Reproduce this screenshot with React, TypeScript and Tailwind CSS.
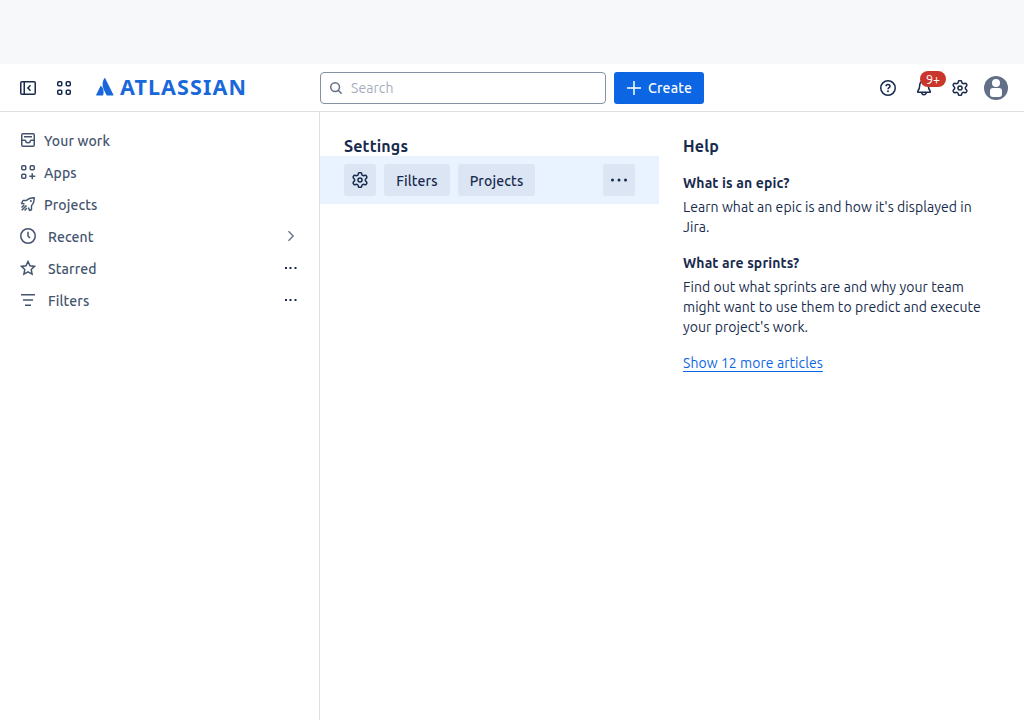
import React from "react";

type SvgProps = { className?: string; children: React.ReactNode; box?: string };

const Svg = ({ className = "", children, box = "0 0 16 16" }: SvgProps) => (
  <svg viewBox={box} className={`size-4 shrink-0 ${className}`} fill="none" stroke="currentColor" strokeWidth="1.5">
    {children}
  </svg>
);

const SidebarIcon = () => (
  <Svg>
    <rect x="0.75" y="1.75" width="14.5" height="12.5" rx="1.25" />
    <path d="M4.25 2v12M10.5 5.25 7.9 8l2.6 2.75" />
  </Svg>
);
const GridIcon = () => (
  <Svg>
    <rect x="1.75" y="1.75" width="4" height="4" rx="1" />
    <rect x="10.25" y="1.75" width="4" height="4" rx="1" />
    <rect x="1.75" y="10.25" width="4" height="4" rx="1" />
    <rect x="10.25" y="10.25" width="4" height="4" rx="1" />
  </Svg>
);
const GearIcon = () => (
  <Svg box="1.4 1.4 21.2 21.2">
    <path
      strokeWidth="2"
      d="M9.671 4.136a2.34 2.34 0 0 1 4.659 0 2.34 2.34 0 0 0 3.319 1.915 2.34 2.34 0 0 1 2.33 4.033 2.34 2.34 0 0 0 0 3.831 2.34 2.34 0 0 1-2.33 4.033 2.34 2.34 0 0 0-3.319 1.915 2.34 2.34 0 0 1-4.659 0 2.34 2.34 0 0 0-3.32-1.915 2.34 2.34 0 0 1-2.33-4.033 2.34 2.34 0 0 0 0-3.831A2.34 2.34 0 0 1 6.35 6.051a2.34 2.34 0 0 0 3.319-1.915"
    />
    <circle cx="12" cy="12" r="2.7" strokeWidth="2" />
  </Svg>
);
const HelpIcon = () => (
  <Svg>
    <circle cx="8" cy="8" r="7.25" />
    <path d="M6 6.3C6 5.1 6.9 4.5 8 4.5s2 .7 2 1.8C10 7.7 8 7.6 8 9.3" />
    <circle cx="8" cy="11.3" r="0.95" fill="currentColor" stroke="none" />
  </Svg>
);
const BellIcon = () => (
  <Svg>
    <path strokeLinejoin="round" d="M8 .75a4.25 4.25 0 0 0-4.25 4.25c0 3-.5 4.5-2 6.25v1h12.5v-1c-1.5-1.75-2-3.25-2-6.25A4.25 4.25 0 0 0 8 .75Z" />
    <path d="M5.75 12.5a2.25 2.25 0 0 0 4.5 0" />
  </Svg>
);
const WorkIcon = () => (
  <Svg>
    <rect x="1.75" y="1.75" width="12.5" height="12.5" rx="1.25" />
    <path d="M4 4.75h8M2 8.25h3c.5 0 .75.4.75.75 0 1 .75 1.75 2.25 1.75S10.25 10 10.25 9c0-.35.25-.75.75-.75h3" />
  </Svg>
);
const AppsIcon = () => (
  <Svg>
    <rect x="1.75" y="1.75" width="4" height="4" rx="1" />
    <rect x="10.25" y="1.75" width="4" height="4" rx="1" />
    <rect x="1.75" y="10.25" width="4" height="4" rx="1" />
    <path d="M12.25 9.25v6M9.25 12.25h6" />
  </Svg>
);
const RocketIcon = () => (
  <Svg>
    <path
      strokeLinejoin="round"
      strokeWidth="1.4"
      d="M6.500 4.500C8.250 2.500 10 1.750 14.250 1.750c0 4.250-.75 6-2.750 7.750v4.250l-2 .75L8.500 11.500M6.500 4.500H3L1.500 7.500 4.500 7.750"
    />
    <path strokeWidth="1.5" d="M6.500 9.500l-4.750 4.750M4.250 9 1.500 11.500M7 12l-2.500 2.500" />
    <circle cx="10.9" cy="5.1" r="1" fill="currentColor" stroke="none" />
  </Svg>
);
const ClockIcon = () => (
  <Svg>
    <circle cx="8" cy="8" r="7.25" />
    <path d="M8 3.75V8l2 2" />
  </Svg>
);
const StarIcon = () => (
  <Svg>
    <path strokeLinejoin="miter" d="m8 1.500 2 4.300 4.600.6-3.350 3.150.85 4.600L8 11.900l-4.100 2.250.85-4.600L1.400 6.400l4.600-.6Z" />
  </Svg>
);
const FilterIcon = () => (
  <Svg>
    <path d="M1 2.75h14M3 8h10M5 13.25h6" />
  </Svg>
);
const Dots = () => (
  <svg viewBox="0 0 16 16" className="size-4 shrink-0 text-[#172b4d]" fill="currentColor">
    <path d="M1.500 7h2v2h-2zM6 7h2v2H6zM11 7h2v2h-2z" transform="translate(.5)" />
  </svg>
);
const BigDots = () => (
  <svg viewBox="0 0 24 24" className="size-6 shrink-0" fill="currentColor">
    <circle cx="5.5" cy="12" r="1.5" />
    <circle cx="12" cy="12" r="1.5" />
    <circle cx="18.5" cy="12" r="1.5" />
  </svg>
);

const nav = [
  { label: "Your work", icon: <WorkIcon />, gap: "ml-2" },
  { label: "Apps", icon: <AppsIcon />, gap: "ml-2" },
  { label: "Projects", icon: <RocketIcon />, gap: "ml-2" },
  { label: "Recent", icon: <ClockIcon />, gap: "ml-3", end: <Svg className="text-[#626f86]"><path strokeWidth="1.3" d="m5.500 3.250 4.700 4.750-4.700 4.750" /></Svg> },
  { label: "Starred", icon: <StarIcon />, gap: "ml-3", end: <Dots /> },
  { label: "Filters", icon: <FilterIcon />, gap: "ml-3", end: <Dots /> },
];

export default function App() {
  return (
    <div className="flex h-[720px] w-[1024px] flex-col overflow-hidden bg-white font-['Ubuntu','Noto_Sans',sans-serif] text-sm leading-5 tracking-[0.065px] text-[#172b4d]">
      <div className="h-16 shrink-0 bg-[#f7f8f9]" />
      <header className="flex h-12 shrink-0 items-center border-b border-[#dcdfe4] pr-4 pl-5">
        <SidebarIcon />
        <span className="ml-5 flex"><GridIcon /></span>
        <svg viewBox="0 0 18 18" className="-mt-0.5 ml-6 size-[18px]" fill="#1868db">
          <path d="M5.2 8.1c-.3-.3-.6-.3-.8.1L.1 16.9c-.15.3 0 .6.4.6h6c.2 0 .4-.1.5-.3 1.3-2.7.5-6.8-1.8-9.1ZM8.4.3C6 4.1 6.2 8.3 7.7 11.4l2.9 5.8c.1.2.3.3.5.3h6c.3 0 .5-.3.4-.6L9.2.3c-.2-.4-.6-.4-.8 0Z" />
        </svg>
        <span className="-mt-0.5 ml-1.5 w-[126px] font-['Noto_Sans',sans-serif] text-[21.5px] leading-6 font-bold tracking-[1.1px] text-[#1868db]">ATLASSIAN</span>
        <div className="ml-[74px] flex h-8 w-[286px] items-center rounded-[4px] border border-[#8590a2] pl-[7px] text-[#626f86]">
          <svg viewBox="0 0 16 16" className="size-4" fill="none" stroke="currentColor" strokeWidth="1.5">
            <circle cx="7.1" cy="7.1" r="4.4" />
            <path d="m10.2 10.2 3.4 3.4" />
          </svg>
          <span className="ml-[7px] text-[#a5adba]">Search</span>
        </div>
        <button className="ml-2 flex h-8 w-[90px] items-center rounded-[3px] bg-[#0c66e4] pl-3 font-medium tracking-[0.2px] text-white">
          <svg viewBox="0 0 16 16" className="size-4" fill="none" stroke="currentColor" strokeWidth="1.5">
            <path d="M8 1v14M1 8h14" />
          </svg>
          <span className="ml-1.5">Create</span>
        </button>
        <div className="ml-auto flex items-center gap-5">
          <HelpIcon />
          <div className="relative flex">
            <BellIcon />
            <span className="absolute -top-[9px] left-1 flex h-4 w-[26px] items-center justify-center rounded-full bg-[#c9372c] text-[12.5px] leading-4 text-white">9+</span>
          </div>
          <GearIcon />
          <svg viewBox="0 0 24 24" className="-ml-1 size-6">
            <circle cx="12" cy="12" r="12" fill="#626f86" />
            <circle cx="12" cy="7" r="4" fill="white" />
            <rect x="6" y="12" width="12" height="9" rx="3" fill="white" />
          </svg>
        </div>
      </header>
      <div className="flex min-h-0 flex-1">
        <aside className="w-80 border-r border-[#dcdfe4] pt-3 text-[#44546f]">
          {nav.map((n) => (
            <div key={n.label} className="flex h-8 items-center px-5 font-medium tracking-[0.13px]">
              {n.icon}
              <span className={`pt-0.5 ${n.gap}`}>{n.label}</span>
              <span className="ml-auto flex">{n.end}</span>
            </div>
          ))}
        </aside>
        <main className="w-[339px] pt-6">
          <h2 className="ml-6 h-5 text-base leading-5 font-bold tracking-[0.16px]">Settings</h2>
          <div className="flex h-12 items-center gap-2 bg-[#e9f2ff] px-6 font-medium tracking-[0.15px]">
            <button className="flex size-8 items-center justify-center rounded-[3px] bg-[#dce5f4]"><GearIcon /></button>
            <button className="h-8 w-[66px] rounded-[3px] bg-[#dce5f4] pt-0.5">Filters</button>
            <button className="h-8 w-[77px] rounded-[3px] bg-[#dce5f4] pt-0.5">Projects</button>
            <button className="ml-auto flex size-8 items-center justify-center rounded-[3px] bg-[#dce5f4]">
              <BigDots />
            </button>
          </div>
        </main>
        <section className="flex-1 px-6 pt-6">
          <h2 className="h-5 text-base leading-5 font-bold tracking-[0.16px]">Help</h2>
          <h3 className="mt-[17px] font-bold tracking-[0.13px]">What is an epic?</h3>
          <p className="mt-1">Learn what an epic is and how it's displayed in<br />Jira.</p>
          <h3 className="mt-4 font-bold tracking-[0.13px]">What are sprints?</h3>
          <p className="mt-1 whitespace-nowrap">Find out what sprints are and why your team<br />might want to use them to predict and execute<br />your project's work.</p>
          <a className="mt-4 inline-block text-[#0c66e4] underline decoration-1 underline-offset-[2.5px]">Show 12 more articles</a>
        </section>
      </div>
    </div>
  );
}
